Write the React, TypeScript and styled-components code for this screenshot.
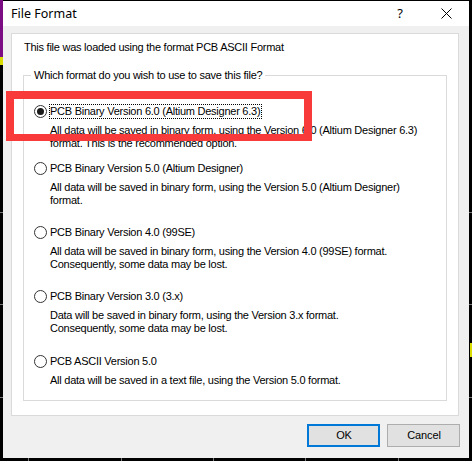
import React from 'react';
import styled, { createGlobalStyle } from 'styled-components';

const Global = createGlobalStyle`
  html, body { margin: 0; padding: 0; background: #000; }
  body { width: 472px; height: 461px; overflow: hidden; }
`;

const Desktop = styled.div`
  width: 472px;
  height: 461px;
  box-sizing: border-box;
  padding: 1px 3px 3px 3px;
  display: flex;
  background:
    linear-gradient(#7c0c84, #7c0c84) 0 0 / 3px 57px no-repeat,
    linear-gradient(#d8dc00, #d8dc00) 0 57px / 3px 8px no-repeat,
    linear-gradient(#d8dc00, #d8dc00) 470px 343px / 2px 14px no-repeat,
    linear-gradient(#777, #777) 0 212px / 3px 1px no-repeat,
    linear-gradient(#777, #777) 0 304px / 3px 1px no-repeat,
    linear-gradient(#777, #777) 0 397px / 3px 1px no-repeat,
    linear-gradient(#777, #777) 469px 212px / 3px 1px no-repeat,
    linear-gradient(#777, #777) 469px 304px / 3px 1px no-repeat,
    linear-gradient(#777, #777) 469px 397px / 3px 1px no-repeat,
    linear-gradient(#777, #777) 28px 458px / 1px 3px no-repeat,
    linear-gradient(#777, #777) 121px 458px / 1px 3px no-repeat,
    linear-gradient(#777, #777) 213px 458px / 1px 3px no-repeat,
    linear-gradient(#777, #777) 305px 458px / 1px 3px no-repeat,
    linear-gradient(#777, #777) 398px 458px / 1px 3px no-repeat,
    #000;
`;

const Dialog = styled.div`
  flex: 1;
  display: flex;
  flex-direction: column;
  background: #f0f0f0;
  font-family: "Liberation Sans", Arial, sans-serif;
  font-size: 11px;
  letter-spacing: -0.25px;
  line-height: 13px;
  color: #000;
`;

const TitleBar = styled.div`
  height: 25px;
  flex: none;
  background: #fff;
  display: flex;
  align-items: center;
  padding-left: 8px;
`;

const Title = styled.div`
  flex: 1;
  font-family: "Noto Sans", "Open Sans", sans-serif;
  font-size: 12.5px;
  letter-spacing: 0;
  color: #000;
  padding-bottom: 1px;
`;

const CaptionButton = styled.div`
  width: 46px;
  height: 25px;
  display: flex;
  align-items: center;
  justify-content: center;
  font-family: "Noto Sans", "Open Sans", sans-serif;
  font-size: 13px;
  letter-spacing: 0;
  color: #000;
`;

const Body = styled.div`
  flex: 1;
  display: flex;
  flex-direction: column;
  padding: 7px 10px 11px 8px;
`;

const Panel = styled.div`
  height: 383px;
  box-sizing: border-box;
  background: #fff;
  border: 1px solid #dadada;
  padding: 7px 11px 0 11px;
  display: flex;
  flex-direction: column;
`;

const Intro = styled.div`
  padding-left: 1px;
`;

const GroupBox = styled.div`
  position: relative;
  margin-top: 21px;
  height: 326px;
  box-sizing: border-box;
  border: 1px solid #dadada;
  padding: 0 0 0 10px;
  display: flex;
  flex-direction: column;
`;

const Legend = styled.div`
  position: absolute;
  top: -7px;
  left: 7px;
  padding: 0 3px;
  background: #fff;
`;

const Option = styled.div<{ $gap: number }>`
  margin-top: ${(p) => p.$gap}px;
  display: flex;
  flex-direction: column;
`;

const OptionHead = styled.div`
  display: flex;
  align-items: center;
  gap: 2px;
`;

const Radio = styled.span<{ $checked?: boolean }>`
  width: 13px;
  height: 13px;
  box-sizing: border-box;
  border-radius: 50%;
  border: 1px solid #333;
  background: #fff;
  display: flex;
  align-items: center;
  justify-content: center;
  &::after {
    content: "";
    width: 7px;
    height: 7px;
    border-radius: 50%;
    background: ${(p) => (p.$checked ? '#1a1a1a' : 'transparent')};
  }
`;

const OptionLabel = styled.span<{ $focused?: boolean }>`
  border: 1px dotted ${(p) => (p.$focused ? '#000' : 'transparent')};
  padding: 0 1px 0 0;
  white-space: nowrap;
`;

const Description = styled.div`
  margin-top: 5px;
  padding-left: 16px;
  white-space: pre-line;
`;

const Highlight = styled.div`
  position: absolute;
  left: -18px;
  top: 15px;
  width: 306px;
  height: 50px;
  box-sizing: border-box;
  border: 8px solid #f93a3a;
  border-bottom-width: 7px;
  pointer-events: none;
`;

const ButtonRow = styled.div`
  margin-top: 8px;
  margin-right: -1px;
  display: flex;
  justify-content: flex-end;
  gap: 7px;
`;

const Button = styled.div<{ $default?: boolean }>`
  width: 73px;
  height: 23px;
  box-sizing: border-box;
  background: #e1e1e1;
  border: ${(p) => (p.$default ? '2px solid #0078d7' : '1px solid #adadad')};
  display: flex;
  align-items: center;
  justify-content: center;
  letter-spacing: -0.1px;
  padding-left: 1px;
`;

const options = [
  {
    gap: 28,
    label: 'PCB Binary Version 6.0 (Altium Designer 6.3)',
    desc: 'All data will be saved in binary form, using the Version 6.0 (Altium Designer 6.3)\nformat. This is the recommended option.',
    checked: true,
  },
  {
    gap: 11,
    label: 'PCB Binary Version 5.0 (Altium Designer)',
    desc: 'All data will be saved in binary form, using the Version 5.0 (Altium Designer)\nformat.',
  },
  {
    gap: 18,
    label: 'PCB Binary Version 4.0 (99SE)',
    desc: 'All data will be saved in binary form, using the Version 4.0 (99SE) format.\nConsequently, some data may be lost.',
  },
  {
    gap: 18,
    label: 'PCB Binary Version 3.0 (3.x)',
    desc: 'Data will be saved in binary form, using the Version 3.x format.\nConsequently, some data may be lost.',
  },
  {
    gap: 19,
    label: 'PCB ASCII Version 5.0',
    desc: 'All data will be saved in a text file, using the Version 5.0 format.',
  },
];

export default function App() {
  return (
    <>
      <Global />
      <Desktop>
        <Dialog>
          <TitleBar>
            <Title>File Format</Title>
            <CaptionButton>?</CaptionButton>
            <CaptionButton>
              <svg width="11" height="11" viewBox="0 0 11 11">
                <path d="M0.5 0.5 L10.5 10.5 M10.5 0.5 L0.5 10.5" stroke="#000" strokeWidth="1" fill="none" />
              </svg>
            </CaptionButton>
          </TitleBar>
          <Body>
            <Panel>
              <Intro>This file was loaded using the format PCB ASCII Format</Intro>
              <GroupBox>
                <Legend>Which format do you wish to use to save this file?</Legend>
                {options.map((o) => (
                  <Option key={o.label} $gap={o.gap}>
                    <OptionHead>
                      <Radio $checked={o.checked} />
                      <OptionLabel $focused={o.checked}>{o.label}</OptionLabel>
                    </OptionHead>
                    <Description>{o.desc}</Description>
                  </Option>
                ))}
                <Highlight />
              </GroupBox>
            </Panel>
            <ButtonRow>
              <Button $default>OK</Button>
              <Button>Cancel</Button>
            </ButtonRow>
          </Body>
        </Dialog>
      </Desktop>
    </>
  );
}
